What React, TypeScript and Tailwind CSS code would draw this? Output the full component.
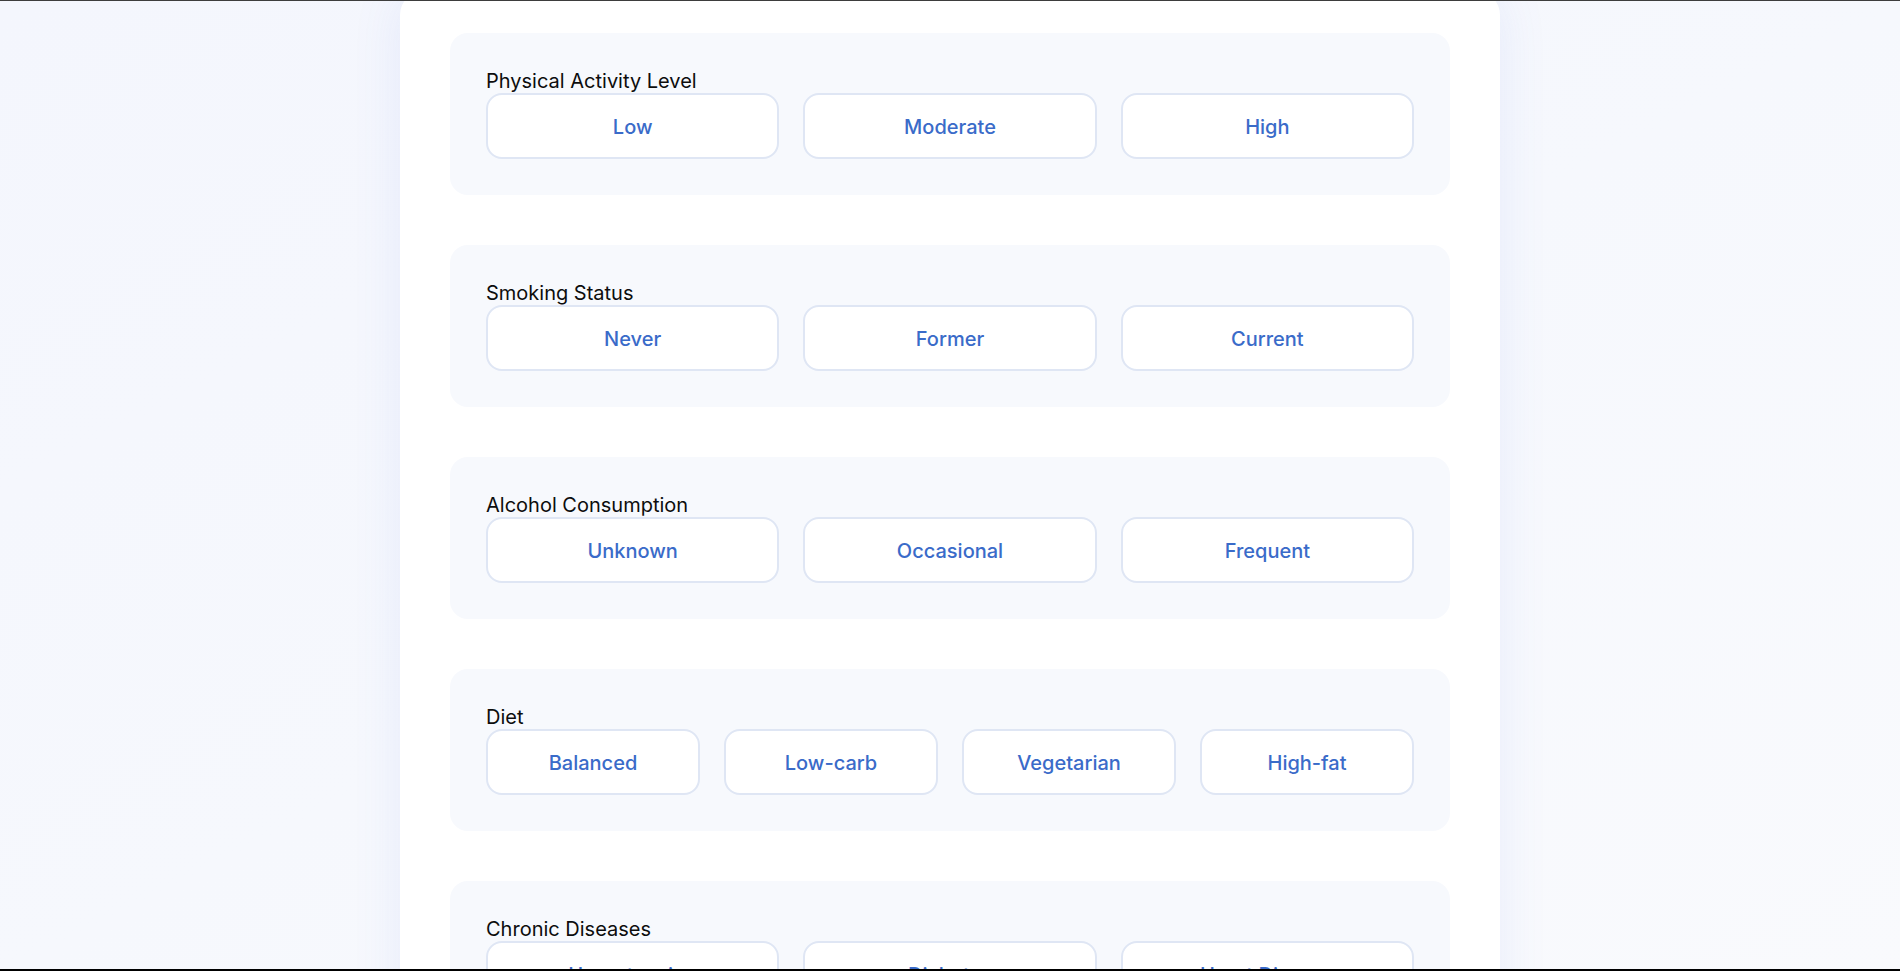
import React from 'react'

type Question = {
  key: string
  label: string
  options: string[]
}

const QUESTIONS: Question[] = [
  { key: 'activity', label: 'Physical Activity Level', options: ['Low', 'Moderate', 'High'] },
  { key: 'smoking', label: 'Smoking Status', options: ['Never', 'Former', 'Current'] },
  { key: 'alcohol', label: 'Alcohol Consumption', options: ['Unknown', 'Occasional', 'Frequent'] },
  { key: 'diet', label: 'Diet', options: ['Balanced', 'Low-carb', 'Vegetarian', 'High-fat'] },
  { key: 'chronic', label: 'Chronic Diseases', options: ['Hypertension', 'Diabetes', 'Heart Disease'] },
]

function OptionGroup({ q }: { q: Question }) {
  const cols = q.options.length === 4 ? 'grid-cols-4' : 'grid-cols-3'
  return (
    <div className="rounded-[18px] bg-[#f7f9fd] p-9">
      <div className="text-[20px] leading-6 text-[#0d0d0d]">{q.label}</div>
      <div className={`grid ${cols} gap-6`}>
        {q.options.map((opt) => (
          <button
            key={opt}
            type="button"
            className="h-[66px] rounded-2xl border-2 border-[#dfe6f4] bg-white pt-px text-[20px] font-medium text-[#3a6bc9]"
          >
            {opt}
          </button>
        ))}
      </div>
    </div>
  )
}

export default function App() {
  return (
    <div
      className="h-[971px] overflow-hidden border-t border-b-2 border-t-[#3d3d3d] border-b-black bg-gradient-to-br from-[#f4f6fd] via-[#f6f8fd] to-[#f9fafd]"
      style={{ fontFamily: 'Inter, "Noto Sans", sans-serif' }}
    >
      <div className="mx-auto -mt-[10px] w-[1100px] rounded-3xl bg-white px-[50px] pt-[42px] pb-12 shadow-[0_0_50px_rgba(90,120,230,0.10)]">
        <div className="flex flex-col gap-[50px]">
          {QUESTIONS.map((q) => (
            <OptionGroup key={q.key} q={q} />
          ))}
        </div>
      </div>
    </div>
  )
}
